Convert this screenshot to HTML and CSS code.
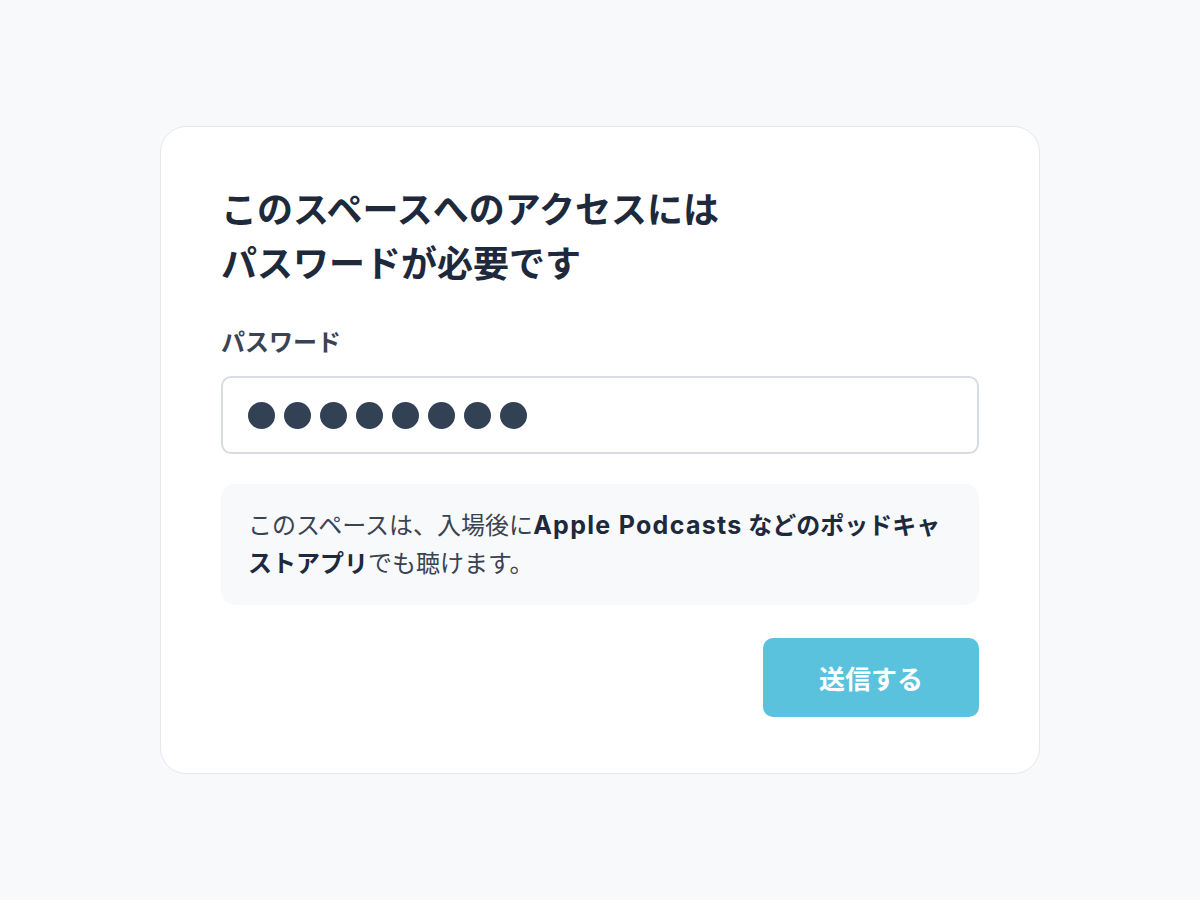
FILE: index.html
```html
<!DOCTYPE html>
<html lang="ja">
<head>
<meta charset="utf-8">
<title>パスワード</title>
<link rel="stylesheet" href="styles.css">
</head>
<body>
<main class="page">
  <form class="card" onsubmit="return false">
    <h1 class="title">このスペースへのアクセスには<br>パスワードが必要です</h1>
    <label class="label" for="pw">パスワード</label>
    <div class="input" id="pw" role="textbox" aria-label="パスワード">
      <span class="dot"></span><span class="dot"></span><span class="dot"></span><span class="dot"></span><span class="dot"></span><span class="dot"></span><span class="dot"></span><span class="dot"></span>
    </div>
    <p class="info">このスペースは、入場後に<strong><span class="latin">Apple Podcasts</span> などのポッドキャストアプリ</strong>でも聴けます。</p>
    <div class="actions">
      <button class="submit" type="submit">送信する</button>
    </div>
  </form>
</main>
</body>
</html>
```

FILE: styles.css
```css
* { box-sizing: border-box; }
html, body { margin: 0; padding: 0; }
body {
  background: #f8f9fb;
  font-family: Inter, "Noto Sans CJK JP", sans-serif;
  color: #1e293b;
}
.page {
  min-height: 100vh;
  display: flex;
  align-items: center;
  justify-content: center;
}
.card {
  width: 880px;
  background: #ffffff;
  border: 1px solid #e5e7eb;
  border-radius: 26px;
  padding: 56px 60px;
  display: flex;
  flex-direction: column;
}
.title {
  margin: 0 0 34px;
  font-size: 36px;
  line-height: 54px;
  font-weight: 700;
  color: #1e293b;
  letter-spacing: 0;
}
.label {
  display: block;
  font-size: 24px;
  line-height: 36px;
  font-weight: 600;
  color: #3a4352;
  margin-bottom: 15px;
}
.input {
  height: 78px;
  border: 2px solid #d8dce2;
  border-radius: 10px;
  padding: 0 25px;
  display: flex;
  align-items: center;
  gap: 9px;
}
.dot {
  width: 27px;
  height: 27px;
  border-radius: 50%;
  background: #334155;
  flex: none;
}
.info {
  margin: 30px 0 0;
  background: #f7f9fb;
  border-radius: 14px;
  padding: 23px 28px 23px 27px;
  font-size: 24px;
  line-height: 37.5px;
  color: #3a4352;
}
.info strong {
  font-weight: 700;
  color: #1e293b;
}
.info .latin {
  font-size: 25px;
  letter-spacing: 1.3px;
}
.actions {
  margin-top: 33px;
  display: flex;
  justify-content: flex-end;
}
.submit {
  width: 216px;
  height: 79px;
  border: none;
  border-radius: 10px;
  background: #5bc2de;
  color: #ffffff;
  font-family: Inter, "Noto Sans CJK JP", sans-serif;
  font-size: 26px;
  font-weight: 700;
  cursor: pointer;
}
```
